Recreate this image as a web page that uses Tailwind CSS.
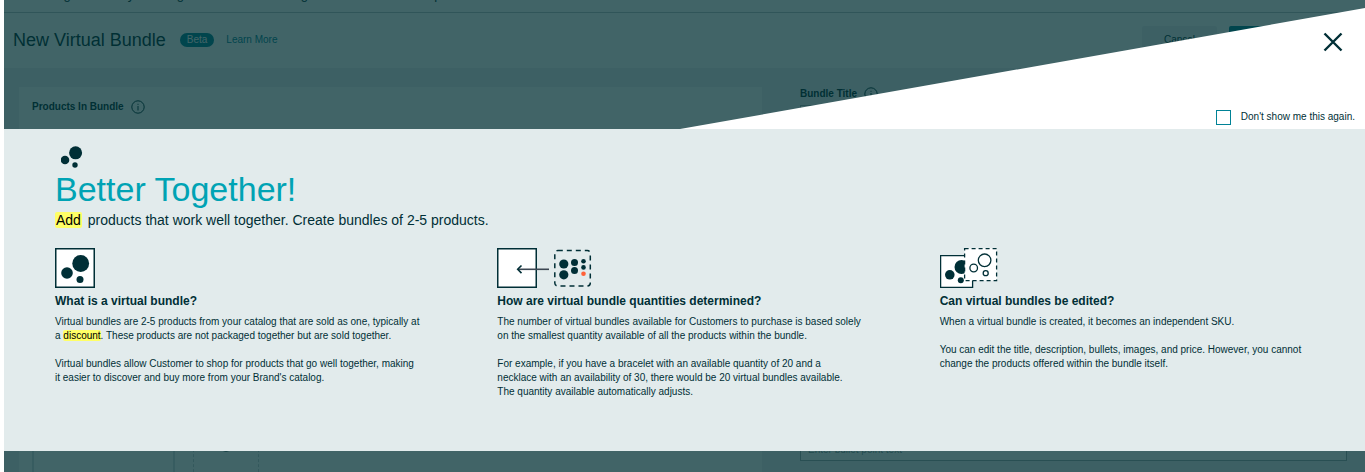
<!DOCTYPE html>
<html lang="en">
<head>
    <meta charset="UTF-8">
    <meta name="viewport" content="width=device-width, initial-scale=1.0">
    <title>New Virtual Bundle</title>
    <script src="https://cdn.jsdelivr.net/npm/@tailwindcss/browser@4"></script>
</head>

<body class="bg-white pl-1 font-['Liberation_Sans',Arial,sans-serif] text-[#002f36]">

<div class="relative h-screen overflow-hidden">

    <!-- Page behind the dialog -->
    <div class="min-h-full bg-[#eef0f4]">
        <nav class="flex h-[13px] items-end gap-[10px] border-b border-[#bcc4c8] bg-white pl-[22px] pb-[9px] text-[13px] leading-4">
            <a href="#">Catalog</a>
            <a href="#">Inventory</a>
            <a href="#">Pricing</a>
            <a href="#">Orders</a>
            <a href="#">Advertising</a>
            <a href="#">Stores</a>
            <a href="#">Growth</a>
            <a href="#">Reports</a>
        </nav>

        <header class="flex h-[55px] items-center bg-white pb-[2px] pl-[9px] pr-4">
            <h1 class="text-[18px] leading-6">New Virtual Bundle</h1>
            <span class="ml-[14px] rounded-full bg-[#008296] px-[7px] text-[10px] leading-[14px] text-white">Beta</span>
            <a href="#" class="ml-3 text-[10px] text-[#008296]">Learn More</a>
            <div class="ml-auto flex gap-3 text-[10px]">
                <button type="button" class="h-7 w-[75px] rounded-xs bg-[#eef0f4]">Cancel</button>
                <button type="button" class="h-7 w-[120px] rounded-xs bg-[#008296] text-white">Submit</button>
            </div>
        </header>

        <main class="flex gap-[38px] pt-[19px] pl-[15px] pr-[18px]">
            <section class="flex h-[400px] w-[743px] flex-col bg-white">
                <h2 class="flex items-center gap-[7px] pt-3 pl-[13px] text-[10px] leading-4 font-bold">
                    Products In Bundle
                    <svg class="h-[14px] w-[14px]" viewBox="0 0 14 14" fill="none" stroke="currentColor"><circle cx="7" cy="7" r="6.2"/><path d="M7 6v4.5M7 3.8v1"/></svg>
                </h2>
                <div class="flex grow gap-[18px] pt-4 pl-[13px]">
                    <div class="w-[143px] border-x-2 border-[#d8dfe2]"></div>
                    <div class="flex w-[66px] justify-center border-x border-dashed border-[#c8d0d4] pt-[307px]">
                        <svg class="h-[14px] w-[14px]" viewBox="0 0 14 14" fill="none" stroke="currentColor"><circle cx="7" cy="7" r="6.2"/><path d="M7 4v6M4 7h6"/></svg>
                    </div>
                </div>
            </section>
            <section class="grow">
                <h2 class="flex items-center gap-[7px] text-[10px] leading-[14px] font-bold">
                    Bundle Title
                    <svg class="h-[14px] w-[14px]" viewBox="0 0 14 14" fill="none" stroke="currentColor"><circle cx="7" cy="7" r="6.2"/><path d="M7 6v4.5M7 3.8v1"/></svg>
                </h2>
                <input type="text" aria-label="Bundle Title" class="mt-1 block h-7 w-full border border-[#a0abb0] bg-white px-2 text-[11px]">
                <input type="text" aria-label="Bullet point" placeholder="Enter bullet point text" class="mt-[305px] block h-[23px] w-full border border-[#a0abb0] bg-white px-[7px] text-[10px]">
            </section>
        </main>
    </div>

    <!-- Intro dialog -->
    <div class="absolute inset-0 bg-[#023034]/75 pt-2" role="dialog" aria-labelledby="intro-title">

        <!-- Slanted corner -->
        <div class="ml-auto flex h-[121px] w-[685px] flex-col items-end justify-between bg-white pt-[22px] pb-1 [clip-path:polygon(0_100%,100%_0,100%_100%)]">
            <button type="button" aria-label="Close" class="mr-[22px] h-6 w-5">
                <svg class="h-6 w-5" viewBox="0 0 20 24" fill="none" stroke="#002f36" stroke-width="2.4"><path d="M1.5 3.5l17 17M18.5 3.5l-17 17"/></svg>
            </button>
            <label class="flex items-center gap-[10px] pr-[10px] text-[10px] leading-4">
                <input type="checkbox" class="h-[15px] w-[15px] appearance-none border border-[#008296] bg-white">
                Don't show me this again.
            </label>
        </div>

        <div class="h-[322px] bg-[#e2ebec] pt-[17px] pr-10 pl-[51px]">
            <svg class="ml-[6px] h-[22px] w-[22px]" viewBox="0 0 22 22" fill="#002f36"><circle cx="14.6" cy="6.8" r="6.5"/><circle cx="4" cy="14" r="4.3"/><circle cx="14" cy="19" r="2.7"/></svg>
            <h2 id="intro-title" class="text-[34px] leading-[42px] text-[#00a3b4]">Better Together!</h2>
            <p class="text-[14px] leading-5"><mark class="mr-[2px] rounded-xs bg-[#ffff66] px-px text-black">Add</mark> products that work well together. Create bundles of 2-5 products.</p>

            <div class="mt-[18px] grid grid-cols-3 gap-[57px] text-[10px] leading-[14px]">
                <section>
                    <svg class="h-10 w-10" viewBox="0 0 40 40" fill="#002f36"><path d="M.75.75h38.5v38.5H.75z" fill="#fff" stroke="#002f36" stroke-width="1.5"/><circle cx="25.7" cy="15.5" r="8.4"/><circle cx="12" cy="25" r="5.8"/><circle cx="25" cy="31.4" r="3.5"/></svg>
                    <h3 class="mt-1 text-[12px] leading-[18px] font-bold">What is a virtual bundle?</h3>
                    <p class="mt-[5px]">Virtual bundles are 2-5 products from your catalog that are sold as one, typically at<br>a <mark class="rounded-xs bg-[#ffff66] text-black">discount</mark>. These products are not packaged together but are sold together.</p>
                    <p class="mt-[14px]">Virtual bundles allow Customer to shop for products that go well together, making<br>it easier to discover and buy more from your Brand's catalog.</p>
                </section>
                <section>
                    <svg class="h-10 w-24" viewBox="0 0 96 40" fill="#002f36">
                        <path d="M.75.75h38.5v38.5H.75z" fill="#fff" stroke="#002f36" stroke-width="1.5"/>
                        <path d="M21 21.3h31" fill="none" stroke="#3c4652" stroke-width="1.6"/>
                        <path d="M24.5 17.5l-3.8 3.8 3.8 3.8" fill="none" stroke="#002f36" stroke-width="1.6"/>
                        <rect x="57.8" y="2.5" width="35.5" height="35.5" rx="3" fill="none" stroke="#002f36" stroke-width="1.5" stroke-dasharray="5 4"/>
                        <circle cx="66.8" cy="16" r="4.6"/><circle cx="66.8" cy="26.8" r="4.6"/>
                        <circle cx="77.5" cy="14.4" r="3.5"/><circle cx="77.5" cy="22.5" r="3.5"/>
                        <circle cx="86.5" cy="13.3" r="2.3"/><circle cx="86.5" cy="19.4" r="2.3"/><circle cx="86.5" cy="25.8" r="2.3" fill="#ff6138"/>
                    </svg>
                    <h3 class="mt-1 text-[12px] leading-[18px] font-bold">How are virtual bundle quantities determined?</h3>
                    <p class="mt-[5px]">The number of virtual bundles available for Customers to purchase is based solely<br>on the smallest quantity available of all the products within the bundle.</p>
                    <p class="mt-[14px]">For example, if you have a bracelet with an available quantity of 20 and a<br>necklace with an availability of 30, there would be 20 virtual bundles available.<br>The quantity available automatically adjusts.</p>
                </section>
                <section>
                    <svg class="h-10 w-[60px]" viewBox="0 0 60 40" fill="#002f36">
                        <path d="M.6 7.6h32v31.8H.6z" fill="#fff" stroke="#002f36" stroke-width="1.3"/>
                        <circle cx="21.5" cy="19" r="7"/><circle cx="9.8" cy="26.8" r="4.8"/><circle cx="20.8" cy="32.2" r="3"/>
                        <path d="M24.6.6h32v32h-32z" fill="#fff" stroke="#002f36" stroke-width="1.3" stroke-dasharray="4 3"/>
                        <g fill="none" stroke="#002f36" stroke-width="1.3"><circle cx="44.6" cy="12.3" r="6.3"/><circle cx="33.7" cy="20" r="3.8"/><circle cx="45.7" cy="25.2" r="2.5"/></g>
                    </svg>
                    <h3 class="mt-1 text-[12px] leading-[18px] font-bold">Can virtual bundles be edited?</h3>
                    <p class="mt-[5px]">When a virtual bundle is created, it becomes an independent SKU.</p>
                    <p class="mt-[14px]">You can edit the title, description, bullets, images, and price. However, you cannot<br>change the products offered within the bundle itself.</p>
                </section>
            </div>
        </div>
    </div>
</div>

</body>
</html>
